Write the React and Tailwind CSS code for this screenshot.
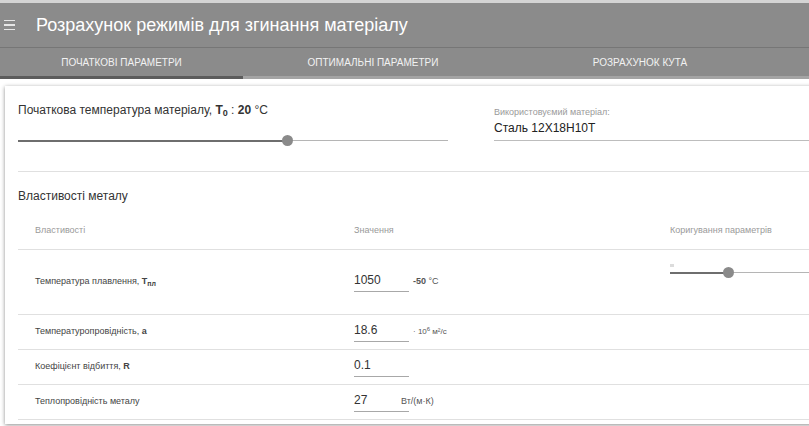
import React from "react";

const properties = [
  {
    label: (
      <>
        Температура плавлення, <b>T<sub className="text-[7px]">пл</sub></b>
      </>
    ),
    value: "1050",
    unit: (
      <span className="ml-[4px] text-[9px] text-[#555]">
        <b>-50</b> °C
      </span>
    ),
    height: "h-[65px]",
    slider: true,
  },
  {
    label: (
      <>
        Температуропровідність, <b>a</b>
      </>
    ),
    value: "18.6",
    unit: (
      <span className="ml-[4px] text-[8px] text-[#555]">
        · 10<sup className="text-[6px]">6</sup> м²/с
      </span>
    ),
    height: "h-[35px]",
  },
  {
    label: (
      <>
        Коефіцієнт відбиття, <b>R</b>
      </>
    ),
    value: "0.1",
    height: "h-[35px]",
  },
  {
    label: "Теплопровідність металу",
    value: "27",
    unit: <span className="ml-[-8px] text-[9px] text-[#555]">Вт/(м·К)</span>,
    height: "h-[35px]",
  },
];

const Slider = ({ width, pos, className = "" }) => (
  <div className={`relative h-[11px] ${className}`} style={{ width }}>
    <div className="absolute left-0 right-0 top-[5px] h-px bg-[#b5b5b5]" />
    <div
      className="absolute left-0 top-[5px] h-[2px] bg-[#6e6e6e]"
      style={{ width: pos }}
    />
    <div
      className="absolute top-0 h-[11px] w-[11px] rounded-full bg-[#8a8a8a]"
      style={{ left: pos - 5 }}
    />
  </div>
);

const App = () => {
  return (
    <div className="w-[809px] h-[426px] overflow-hidden bg-white font-['Liberation_Sans',sans-serif]">
      <div className="h-[3px] bg-[#d4d4d4]" />
      <div className="h-[44px] bg-[#8b8b8b] flex items-center">
        <div className="ml-[4px] flex flex-col gap-[3px] w-[11px]">
          <span className="h-[1.5px] bg-[#e6e6e6]" />
          <span className="h-[1.5px] bg-[#e6e6e6]" />
          <span className="h-[1.5px] bg-[#e6e6e6]" />
        </div>
        <h1 className="ml-[21px] text-[18px] text-white">
          Розрахунок режимів для згинання матеріалу
        </h1>
      </div>
      <div className="h-px bg-[#767676]" />
      <div className="h-[28px] bg-[#8b8b8b] flex items-center text-[10px] text-[#f2f2f2] uppercase">
        <div className="w-[243px] text-center">Початкові параметри</div>
        <div className="w-[260px] text-center">Оптимальні параметри</div>
        <div className="w-[274px] text-center">Розрахунок кута</div>
      </div>
      <div className="flex h-[3px]">
        <div className="w-[243px] bg-[#5c5c5c]" />
        <div className="flex-1 bg-[#a4a4a4]" />
      </div>

      <div className="mt-[7px] ml-[5px] w-[840px] bg-white shadow-[0_1px_4px_rgba(0,0,0,0.45)] pt-[16px] pl-[13px] text-[#333]">
        <div className="flex h-[69px]">
          <div className="w-[430px]">
            <div className="text-[12px] leading-[16px]">
              Початкова температура матеріалу,{" "}
              <b>
                T<sub className="text-[9px]">0</sub>
              </b>{" "}
              : <b>20</b> °C
            </div>
            <Slider width={430} pos={269} className="mt-[17px]" />
          </div>
          <div className="ml-[46px] flex-1">
            <div className="pt-[5px] text-[9px] leading-[11px] text-[#9a9a9a]">
              Використовуємий матеріал:
            </div>
            <div className="mt-[2px] text-[12px] leading-[16px] pb-[4px] border-b border-[#bdbdbd] text-[#222]">
              Сталь 12Х18Н10Т
            </div>
          </div>
        </div>

        <div className="border-t border-[#e0e0e0] pt-[16px]">
          <div className="text-[12px] leading-[16px]">Властивості металу</div>
          <div className="grid grid-cols-[336px_316px_1fr] h-[46px] pt-[20px] border-b border-[#e0e0e0] text-[9px] leading-[12px] text-[#9a9a9a]">
            <div className="pl-[17px]">Властивості</div>
            <div>Значення</div>
            <div>Коригування параметрів</div>
          </div>

          {properties.map((p, i) => (
            <div
              key={i}
              className={`grid grid-cols-[336px_316px_1fr] items-center border-b border-[#e0e0e0] ${p.height}`}
            >
              <div className="pl-[17px] text-[9px] text-[#444]">{p.label}</div>
              <div className="flex items-center">
                <span className="block w-[55px] border-b border-[#a8a8a8] pb-[3px] text-[12px] leading-[16px] text-[#333]">
                  {p.value}
                </span>
                {p.unit}
              </div>
              <div>
                {p.slider && (
                  <div className="relative mb-[20px]">
                    <div className="absolute left-0 top-[-3px] h-[3px] w-[4px] bg-[#dcdcdc]" />
                    <Slider width={160} pos={58} />
                  </div>
                )}
              </div>
            </div>
          ))}
          <div className="h-[4px]" />
        </div>
      </div>
    </div>
  );
};

export default App;
